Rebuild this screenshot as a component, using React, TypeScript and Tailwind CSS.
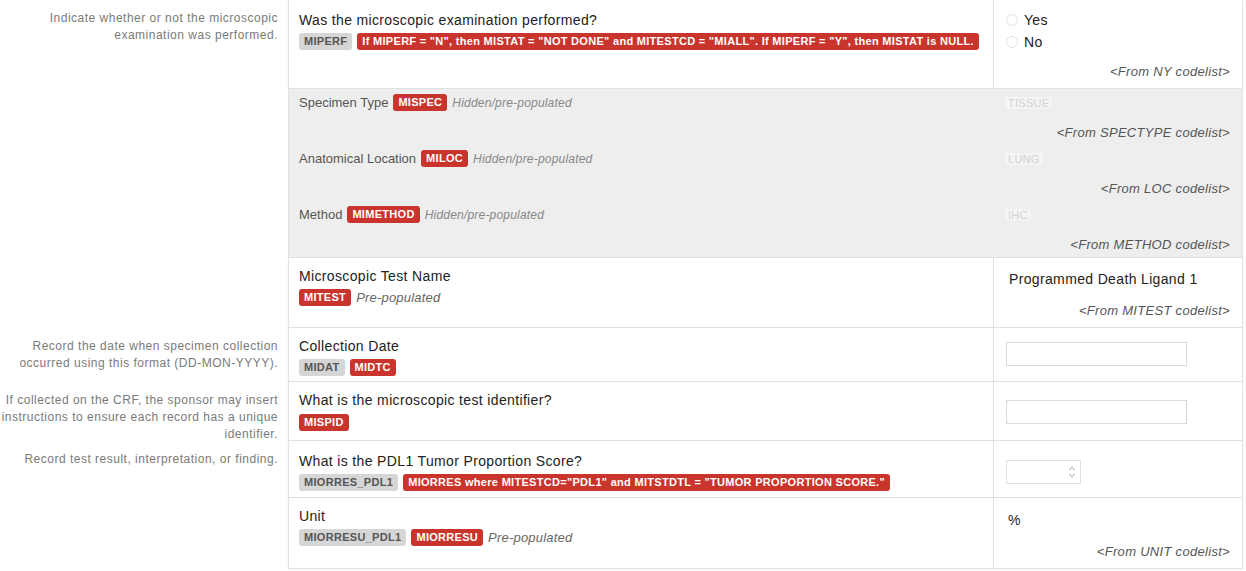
import type { ReactNode } from 'react'

function Badge({ tone, children }: { tone: 'gray' | 'red'; children: ReactNode }) {
  return (
    <span
      className={`inline-flex h-[17px] items-center whitespace-nowrap rounded-[3px] px-[5px] text-[11px] font-bold leading-none tracking-[0.3px] ${
        tone === 'red' ? 'bg-[#c9342d] text-white' : 'bg-[#d6d6d6] text-[#555]'
      }`}
    >
      {children}
    </span>
  )
}

function Note({ children }: { children: ReactNode }) {
  return <span className="text-[13px] italic tracking-[0.2px] text-[#666]">{children}</span>
}

function Codelist({ children }: { children: ReactNode }) {
  return <div className="text-right text-[13px] italic leading-5 tracking-[0.3px] text-[#555]">{children}</div>
}

function Row({
  helper,
  height,
  left,
  right,
}: {
  helper?: ReactNode
  height: string
  left: ReactNode
  right: ReactNode
}) {
  return (
    <div className={`flex ${height}`}>
      <div className="w-[288px] shrink-0 pr-[10px] pt-[10px] text-right text-[12px] leading-[17px] tracking-[0.5px] text-[#7a7a7a]">
        {helper}
      </div>
      <div className="flex flex-1 border-x border-b border-[#e2e2e2] bg-white shadow-[0_1px_3px_rgba(0,0,0,0.06)]">
        <div className="flex-1 pl-[10px] pt-[8px]">{left}</div>
        <div className="w-[249px] shrink-0 border-l border-[#e2e2e2] px-[12px] pt-[8px]">{right}</div>
      </div>
    </div>
  )
}

function Radio({ label }: { label: string }) {
  return (
    <div className="flex h-[22px] items-center gap-[6px] text-[14px] tracking-[0.3px] text-[#222]">
      <span className="h-[12px] w-[12px] rounded-full border border-[#e4e4e4] bg-white" />
      {label}
    </div>
  )
}

function TextBox({ w }: { w: string }) {
  return <div className={`h-[24px] ${w} border border-[#d9d9d9] bg-white`} />
}

function Question({ children, pad = '' }: { children: ReactNode; pad?: string }) {
  return <div className={`${pad} text-[14px] leading-5 tracking-[0.35px] text-[#222]`}>{children}</div>
}

function HiddenRow({
  label,
  code,
  value,
  list,
}: {
  label: string
  code: string
  value: string
  list: string
}) {
  return (
    <div className="flex h-[56px]">
      <div className="flex flex-1 items-start gap-[5px] pl-[10px] pt-[5px]">
        <span className="text-[13px] leading-[18px] text-[#555]">{label}</span>
        <Badge tone="red">{code}</Badge>
        <span className="text-[12px] italic leading-[18px] tracking-[0.2px] text-[#888]">Hidden/pre-populated</span>
      </div>
      <div className="w-[249px] shrink-0 px-[12px] pt-[5px]">
        <div className="h-[18px] text-[11px] leading-[18px] tracking-wide text-[#d2d2d2]">
          <span className="rounded-[2px] bg-[#f4f4f4] px-[3px]">{value}</span>
        </div>
        <div className="pt-[11px]">
          <Codelist>{list}</Codelist>
        </div>
      </div>
    </div>
  )
}

export default function App() {
  return (
    <div className="h-[571px] w-[1246px] overflow-hidden bg-white pr-[3px] font-['Liberation_Sans',Arial,sans-serif]">
      <Row
        height="h-[89px]"
        helper={
          <>
            Indicate whether or not the microscopic
            <br />
            examination was performed.
          </>
        }
        left={
          <>
            <Question pad="py-[2px]">Was the microscopic examination performed?</Question>
            <div className="mt-[1px] flex gap-[5px]">
              <Badge tone="gray">MIPERF</Badge>
              <Badge tone="red">
                If MIPERF = "N", then MISTAT = "NOT DONE" and MITESTCD = "MIALL". If MIPERF = "Y", then MISTAT is NULL.
              </Badge>
            </div>
          </>
        }
        right={
          <>
            <div className="pt-[1px]">
              <Radio label="Yes" />
              <Radio label="No" />
            </div>
            <div className="pt-[9px]">
              <Codelist>&lt;From NY codelist&gt;</Codelist>
            </div>
          </>
        }
      />

      <div className="flex h-[169px]">
        <div className="w-[288px] shrink-0" />
        <div className="flex-1 border-x border-b border-[#e2e2e2] bg-[#eeeeee]">
          <HiddenRow label="Specimen Type" code="MISPEC" value="TISSUE" list="<From SPECTYPE codelist>" />
          <HiddenRow label="Anatomical Location" code="MILOC" value="LUNG" list="<From LOC codelist>" />
          <HiddenRow label="Method" code="MIMETHOD" value="IHC" list="<From METHOD codelist>" />
        </div>
      </div>

      <Row
        height="h-[70px]"
        left={
          <>
            <Question>Microscopic Test Name</Question>
            <div className="mt-[2px] flex items-center gap-[5px]">
              <Badge tone="red">MITEST</Badge>
              <Note>Pre-populated</Note>
            </div>
          </>
        }
        right={
          <>
            <Question pad="pt-[3px] pl-[3px]">Programmed Death Ligand 1</Question>
            <div className="pt-[12px]">
              <Codelist>&lt;From MITEST codelist&gt;</Codelist>
            </div>
          </>
        }
      />

      <Row
        height="h-[54px]"
        helper={
          <>
            Record the date when specimen collection
            <br />
            occurred using this format (DD-MON-YYYY).
          </>
        }
        left={
          <>
            <Question>Collection Date</Question>
            <div className="mt-[3px] flex gap-[5px]">
              <Badge tone="gray">MIDAT</Badge>
              <Badge tone="red">MIDTC</Badge>
            </div>
          </>
        }
        right={
          <div className="pt-[6px]">
            <TextBox w="w-[181px]" />
          </div>
        }
      />

      <Row
        height="h-[59px]"
        helper={
          <>
            If collected on the CRF, the sponsor may insert
            <br />
            instructions to ensure each record has a unique
            <br />
            identifier.
          </>
        }
        left={
          <>
            <Question>What is the microscopic test identifier?</Question>
            <div className="mt-[4px] flex gap-[5px]">
              <Badge tone="red">MISPID</Badge>
            </div>
          </>
        }
        right={
          <div className="pt-[10px]">
            <TextBox w="w-[181px]" />
          </div>
        }
      />

      <Row
        height="h-[57px]"
        helper="Record test result, interpretation, or finding."
        left={
          <>
            <Question pad="pt-[2px]">What is the PDL1 Tumor Proportion Score?</Question>
            <div className="mt-[3px] flex gap-[5px]">
              <Badge tone="gray">MIORRES_PDL1</Badge>
              <Badge tone="red">MIORRES where MITESTCD="PDL1" and MITSTDTL = "TUMOR PROPORTION SCORE."</Badge>
            </div>
          </>
        }
        right={
          <div className="pt-[11px]">
            <div className="flex h-[24px] w-[75px] items-center justify-end border border-[#e0e0e0] bg-white pr-[4px]">
              <svg viewBox="0 0 8 14" className="h-[14px] w-[8px]" fill="none" stroke="#c4c4c4" strokeWidth={1.2}>
                <path d="M1.5 5 L4 2 L6.5 5" />
                <path d="M1.5 9 L4 12 L6.5 9" />
              </svg>
            </div>
          </div>
        }
      />

      <Row
        height="h-[71px]"
        left={
          <>
            <Question>Unit</Question>
            <div className="mt-[2px] flex items-center gap-[5px]">
              <Badge tone="gray">MIORRESU_PDL1</Badge>
              <Badge tone="red">MIORRESU</Badge>
              <Note>Pre-populated</Note>
            </div>
          </>
        }
        right={
          <>
            <Question pad="pt-[4px] pl-[2px]">%</Question>
            <div className="pt-[12px]">
              <Codelist>&lt;From UNIT codelist&gt;</Codelist>
            </div>
          </>
        }
      />
    </div>
  )
}
